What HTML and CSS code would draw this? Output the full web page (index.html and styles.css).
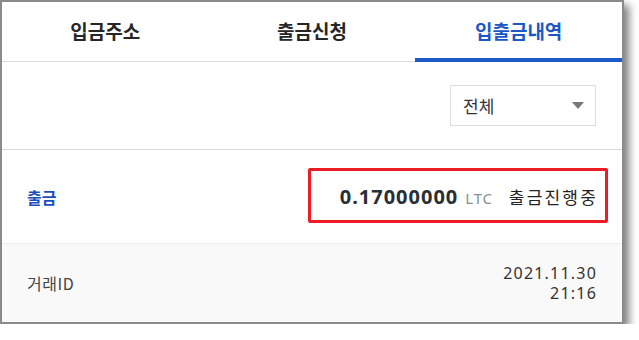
FILE: index.html
```html
<!DOCTYPE html>
<html lang="ko">
<head>
<meta charset="utf-8">
<link rel="stylesheet" href="styles.css">
</head>
<body>
<div class="window">
  <nav class="tabs">
    <div class="tab">입금주소</div>
    <div class="tab">출금신청</div>
    <div class="tab active">입출금내역</div>
  </nav>
  <div class="filter">
    <div class="select">
      <span>전체</span>
      <span class="caret"></span>
    </div>
  </div>
  <div class="row main">
    <span class="type">출금</span>
    <span class="highlight">
      <span class="amount">0.17000000</span>
      <span class="unit">LTC</span>
      <span class="status">출금진행중</span>
    </span>
  </div>
  <div class="row sub">
    <span class="label">거래ID</span>
    <span class="date">2021.11.30<br>21:16</span>
  </div>
</div>
</body>
</html>
```
FILE: styles.css
```css
* { box-sizing: border-box; }
body {
  margin: 0;
  background: #fff;
  font-family: "Noto Sans", "Noto Sans CJK KR", sans-serif;
}
.window {
  width: 624px;
  height: 324px;
  border: 2px solid #8a8a8a;
  background: #fff;
  box-shadow: 5px 5px 8px rgba(0,0,0,0.5);
  display: flex;
  flex-direction: column;
}
.tabs {
  display: grid;
  grid-template-columns: 1fr 1fr 1fr;
  height: 60px;
  border-bottom: 1px solid #d9dce2;
}
.tab {
  position: relative;
  display: flex;
  align-items: center;
  justify-content: center;
  font-family: "Noto Sans CJK KR", sans-serif;
  font-size: 19px;
  font-weight: 700;
  color: #262626;
  padding-bottom: 2px;
}
.tab.active { color: #1b58c5; }
.tab.active::after {
  content: "";
  position: absolute;
  left: 0; right: 0; bottom: -1px;
  height: 4px;
  background: #1b5cc8;
}
.filter {
  height: 88px;
  display: flex;
  justify-content: flex-end;
  align-items: flex-start;
  padding: 23px 26px 0 0;
  border-bottom: 1px solid #d7dbe0;
}
.select {
  width: 146px;
  height: 41px;
  border: 1px solid #dcdde0;
  display: flex;
  align-items: center;
  justify-content: space-between;
  padding: 0 11px 0 12px;
  font-family: "Noto Sans CJK KR", sans-serif;
  font-size: 17px;
  color: #333;
}
.caret {
  width: 0; height: 0;
  border-left: 6px solid transparent;
  border-right: 6px solid transparent;
  border-top: 7px solid #777;
}
.row {
  display: flex;
  align-items: center;
  justify-content: space-between;
  padding: 0 26px 0 25px;
}
.main { height: 93px; }
.type {
  color: #1b4fbf;
  font-family: "Noto Sans CJK KR", sans-serif;
  font-weight: 700;
  font-size: 16px;
}
.highlight {
  position: relative;
  display: flex;
  align-items: baseline;
}
.highlight::after {
  content: "";
  position: absolute;
  left: -32px; right: -12px; top: -15px; bottom: -13px;
  border: 3px solid #ec1c24;
  border-radius: 2px;
}
.amount {
  font-size: 20px;
  font-weight: 700;
  color: #2a2e35;
  letter-spacing: 1px;
}
.unit {
  font-size: 15px;
  color: #8a8f96;
  margin-left: 7px;
  letter-spacing: 0.8px;
}
.status {
  font-family: "Noto Sans CJK KR", sans-serif;
  font-size: 17px;
  color: #222;
  margin-left: 16px;
  letter-spacing: 2.2px;
  margin-right: -2px;
}
.sub {
  flex: 1;
  background: #f9f9f9;
  border-top: 1px solid #eeeff1;
}
.label {
  font-family: "Noto Sans CJK KR", sans-serif;
  font-size: 16px;
  color: #444;
  letter-spacing: 0.5px;
}
.date {
  text-align: right;
  font-size: 16px;
  line-height: 20px;
  letter-spacing: 1.2px;
  color: #333;
  margin-right: -1px;
}
```
